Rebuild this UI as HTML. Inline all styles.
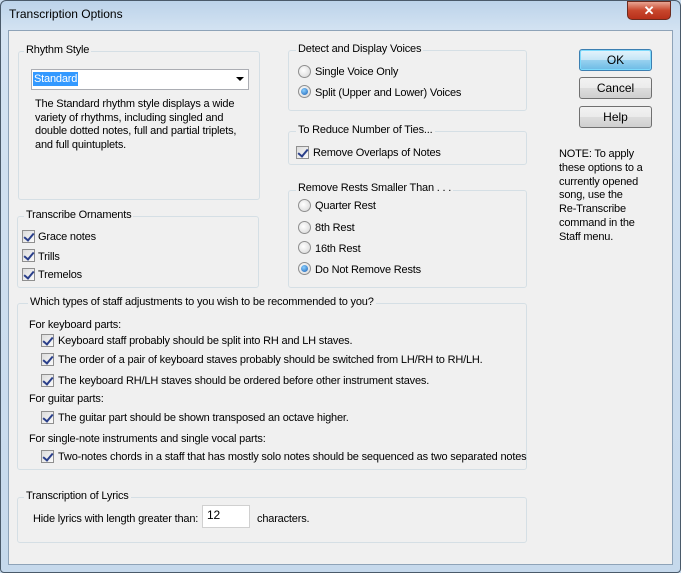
<!DOCTYPE html>
<html><head><style>
*{box-sizing:border-box;margin:0;padding:0}
body{width:681px;height:573px;overflow:hidden;background:#c9dbed;font-family:"Liberation Sans",sans-serif;font-size:11px;color:#000;position:relative;letter-spacing:-0.18px}
.frame{position:absolute;left:0;top:0;width:681px;height:573px;border:1px solid #4a5a6a;border-radius:6px 6px 4px 4px;background:linear-gradient(180deg,#bcd3ea 0,#d4e3f2 30px,#c6d9ec 100%)}
.title{position:absolute;left:9px;top:7px;font-size:12px;color:#000;letter-spacing:0}
.close{position:absolute;left:627px;top:1px;width:44px;height:19px;border:1px solid #6b2a1e;border-radius:0 0 5px 5px;background:linear-gradient(#e8a593,#c8462c 50%,#b8301a);color:#fff;font-weight:bold;font-size:13px;text-align:center;line-height:17px}
.client{position:absolute;left:8px;top:30px;width:665px;height:535px;background:#f0f0f0;border:1px solid #8ea3b8}
.a{position:absolute;white-space:nowrap}
.t{position:absolute;white-space:nowrap;margin-top:2px}
.g{position:absolute;border:1px solid #d5dfe5;border-radius:3px}
.gl{position:absolute;background:#f0f0f0;padding:0 2px;white-space:nowrap;margin-top:2px}
.cb{position:absolute;width:13px;height:13px;border:1px solid #8f8f8f;background:linear-gradient(135deg,#dcdcdc,#fafafa)}
.cb::after{content:"";position:absolute;left:3px;top:0px;width:4px;height:8px;border:solid #2a3f8a;border-width:0 2px 2px 0;transform:rotate(40deg)}
.rb{position:absolute;width:13px;height:13px;border:1px solid #8f8f8f;border-radius:50%;background:radial-gradient(circle at 40% 40%,#fff,#d4d4d4)}
.rb.on::after{content:"";position:absolute;left:2px;top:2px;width:7px;height:7px;border-radius:50%;background:radial-gradient(circle at 40% 35%,#8bd0ff,#1a5fb4)}
.btn{position:absolute;width:73px;height:22px;border:1px solid #707070;border-radius:3px;background:linear-gradient(#f2f2f2 0,#ebebeb 50%,#dddddd 51%,#cfcfcf);text-align:center;line-height:20px;font-size:12px;letter-spacing:0}
</style></head><body>
<div class="frame"></div>
<div class="title">Transcription Options</div>
<div class="close">✕</div>
<div class="client"></div>

<div class="g" style="left:18px;top:51px;width:242px;height:149px"></div>
<div class="gl" style="left:24px;top:42px">Rhythm Style</div>
<div class="a" style="left:31px;top:69px;width:218px;height:21px;background:#fff;border:1px solid #abadb3"></div>
<div class="a" style="left:33px;top:72px;background:#3399ff;color:#fff;padding:0 1px;line-height:14px">Standard</div>
<div class="a" style="left:236px;top:77px;width:0;height:0;border-left:4px solid transparent;border-right:4px solid transparent;border-top:4px solid #000"></div>
<div class="t" style="left:35px;top:96px;line-height:13.7px;white-space:normal;width:220px">The Standard rhythm style displays a wide variety of rhythms, including singled and double dotted notes, full and partial triplets, and full quintuplets.</div>

<div class="g" style="left:17px;top:216px;width:242px;height:72px"></div>
<div class="gl" style="left:24px;top:207px">Transcribe Ornaments</div>
<div class="cb" style="left:22px;top:230px"></div><div class="t" style="left:38px;top:229px">Grace notes</div>
<div class="cb" style="left:22px;top:249px"></div><div class="t" style="left:38px;top:249px">Trills</div>
<div class="cb" style="left:22px;top:268px"></div><div class="t" style="left:38px;top:267px">Tremelos</div>

<div class="g" style="left:288px;top:50px;width:239px;height:61px"></div>
<div class="gl" style="left:296px;top:41px">Detect and Display Voices</div>
<div class="rb" style="left:298px;top:65px"></div><div class="t" style="left:315px;top:64px">Single Voice Only</div>
<div class="rb on" style="left:298px;top:85px"></div><div class="t" style="left:315px;top:85px">Split (Upper and Lower) Voices</div>

<div class="g" style="left:288px;top:131px;width:239px;height:34px"></div>
<div class="gl" style="left:296px;top:122px">To Reduce Number of Ties...</div>
<div class="cb" style="left:296px;top:146px"></div><div class="t" style="left:313px;top:145px">Remove Overlaps of Notes</div>

<div class="g" style="left:288px;top:190px;width:239px;height:98px"></div>
<div class="gl" style="left:296px;top:180px">Remove Rests Smaller Than . . .</div>
<div class="rb" style="left:298px;top:199px"></div><div class="t" style="left:315px;top:198px">Quarter Rest</div>
<div class="rb" style="left:298px;top:221px"></div><div class="t" style="left:315px;top:220px">8th Rest</div>
<div class="rb" style="left:298px;top:241px"></div><div class="t" style="left:315px;top:241px">16th Rest</div>
<div class="rb on" style="left:298px;top:262px"></div><div class="t" style="left:315px;top:262px">Do Not Remove Rests</div>

<div class="btn" style="left:579px;top:49px;border-color:#3c7fb1;background:linear-gradient(#e5f4fc 0,#c4e5f6 50%,#98d1ef 51%,#6cbbe6);box-shadow:inset 0 0 0 1px #7ddafc">OK</div>
<div class="btn" style="left:579px;top:77px">Cancel</div>
<div class="btn" style="left:579px;top:106px">Help</div>
<div class="t" style="left:559px;top:146px;line-height:13.8px">NOTE: To apply<br>these options to a<br>currently opened<br>song, use the<br>Re-Transcribe<br>command in the<br>Staff menu.</div>

<div class="g" style="left:17px;top:303px;width:510px;height:167px"></div>
<div class="gl" style="left:28px;top:294px">Which types of staff adjustments to you wish to be recommended to you?</div>
<div class="t" style="left:29px;top:317px">For keyboard parts:</div>
<div class="cb" style="left:41px;top:334px"></div><div class="t" style="left:58px;top:333px">Keyboard staff probably should be split into RH and LH staves.</div>
<div class="cb" style="left:41px;top:353px"></div><div class="t" style="left:58px;top:352px">The order of a pair of keyboard staves probably should be switched from LH/RH to RH/LH.</div>
<div class="cb" style="left:41px;top:374px"></div><div class="t" style="left:58px;top:373px">The keyboard RH/LH staves should be ordered before other instrument staves.</div>
<div class="t" style="left:29px;top:391px">For guitar parts:</div>
<div class="cb" style="left:41px;top:411px"></div><div class="t" style="left:58px;top:410px">The guitar part should be shown transposed an octave higher.</div>
<div class="t" style="left:29px;top:431px">For single-note instruments and single vocal parts:</div>
<div class="cb" style="left:41px;top:450px"></div><div class="t" style="left:58px;top:449px">Two-notes chords in a staff that has mostly solo notes should be sequenced as two separated notes</div>

<div class="g" style="left:17px;top:497px;width:510px;height:46px"></div>
<div class="gl" style="left:24px;top:488px">Transcription of Lyrics</div>
<div class="t" style="left:33px;top:511px">Hide lyrics with length greater than:</div>
<div class="a" style="left:202px;top:505px;width:48px;height:23px;background:#fff;border:1px solid #d0d0d0;padding:2px 4px;font-size:12px">12</div>
<div class="t" style="left:257px;top:511px">characters.</div>
</body></html>
